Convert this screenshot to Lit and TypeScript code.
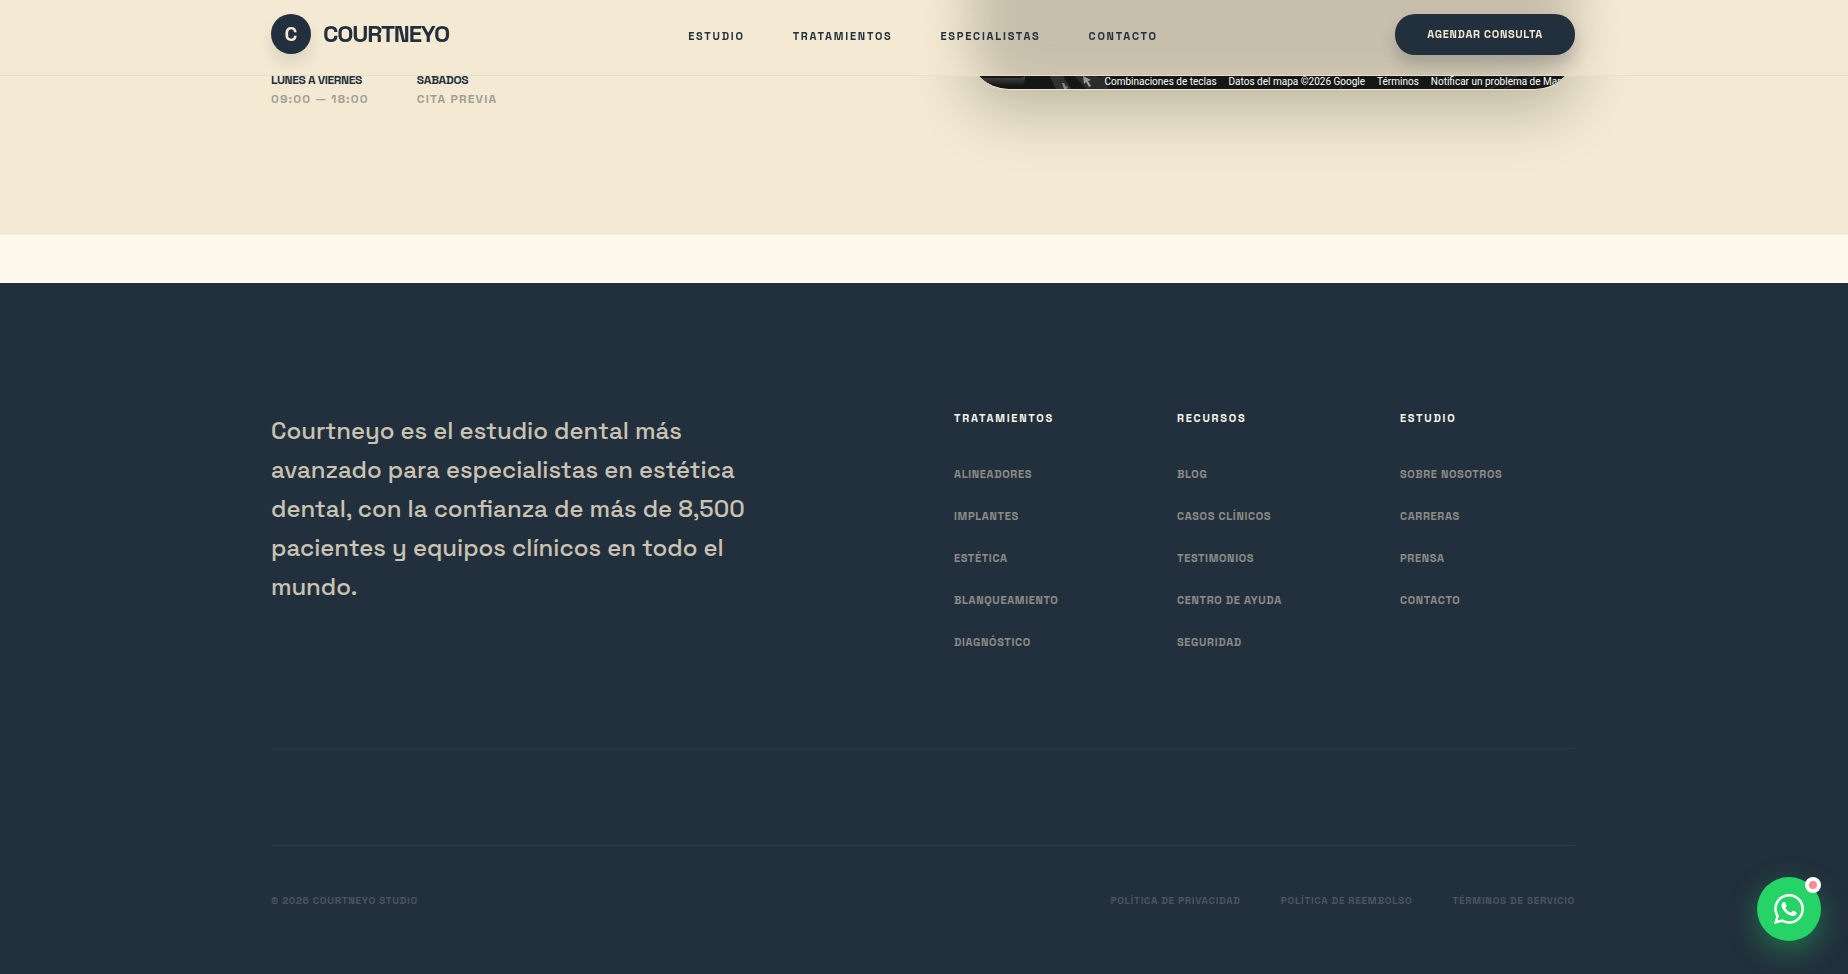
import { LitElement, html, css } from "lit";
import { customElement } from "lit/decorators.js";

const NAV = ["Estudio", "Tratamientos", "Especialistas", "Contacto"];
const COLUMNS = [
  { title: "Tratamientos", links: ["Alineadores", "Implantes", "Estética", "Blanqueamiento", "Diagnóstico"] },
  { title: "Recursos", links: ["Blog", "Casos clínicos", "Testimonios", "Centro de ayuda", "Seguridad"] },
  { title: "Estudio", links: ["Sobre nosotros", "Carreras", "Prensa", "Contacto"] },
];
const LEGAL = ["Política de privacidad", "Política de reembolso", "Términos de servicio"];
const MAP_LINKS = ["Combinaciones de teclas", "Datos del mapa ©2026 Google", "Términos", "Notificar un problema de Maps"];

@customElement("app-root")
export class AppRoot extends LitElement {
  static styles = css`
    :host {
      --navy: #222f3c;
      --cream: #f4e9d2;
      display: block;
      min-height: 100vh;
      background: var(--navy);
      color: var(--navy);
      font-family: "Space Grotesk", Inter, "Liberation Sans", sans-serif;
    }
    * { box-sizing: border-box; }
    a { color: inherit; text-decoration: none; }
    .wrap { max-width: 1400px; margin: 0 auto; padding: 0 49px 0 47px; }

    .header {
      position: fixed;
      inset: 0 0 auto 0;
      z-index: 10;
      background: var(--cream);
      border-bottom: 1px solid #e7ddc8;
    }
    /* Frosted impression of the map card sliding under the header */
    .glass { position: absolute; inset: 0; overflow: hidden; }
    .glass-row { display: flex; justify-content: flex-end; }
    .glass-map { width: 606px; height: 170px; margin-top: -70px; border-radius: 60px; background: #c7bfab; filter: blur(24px); }
    .bar {
      position: relative;
      display: grid;
      grid-template-columns: 1fr auto 1fr;
      align-items: start;
      padding-top: 14px;
      padding-bottom: 20px;
    }
    .brand { display: flex; align-items: center; gap: 12px; font-size: 24px; line-height: 40px; font-weight: 700; letter-spacing: -0.05em; }
    .mark {
      width: 40px; height: 40px; border-radius: 50%;
      background: var(--navy); color: var(--cream);
      font-size: 20px; font-weight: 700; text-align: center; letter-spacing: 0;
      box-shadow: 0 10px 15px rgba(34, 47, 60, 0.1);
    }
    .nav { display: flex; gap: 48px; padding-top: 12px; font-size: 11px; line-height: 20px; font-weight: 600; letter-spacing: 0.16em; text-transform: uppercase; }
    .cta {
      justify-self: end;
      height: 41px; padding: 0 32px 2px; border: 0; border-radius: 20px;
      background: var(--navy); color: var(--cream);
      font: inherit; font-size: 11px; font-weight: 700; letter-spacing: 0.06em; text-transform: uppercase;
      box-shadow: 0 10px 15px rgba(34, 47, 60, 0.2);
    }

    .location { background: var(--cream); }
    .location-grid {
      display: grid; grid-template-columns: 1fr 606px;
      justify-content: space-between;
      padding-bottom: 145px;
    }
    .hours { display: flex; gap: 48px; margin: 0; padding-top: 70px; height: 90px; }
    .hours dt { font-size: 12px; line-height: 20px; font-weight: 700; letter-spacing: -0.03em; text-transform: uppercase; }
    .hours dd { margin: 0; font-size: 12px; line-height: 18px; font-weight: 600; letter-spacing: 0.1em; text-transform: uppercase; opacity: 0.4; }
    .map-box { height: 90px; border-radius: 0 0 40px 40px; box-shadow: 0 20px 60px rgba(20, 30, 20, 0.26); }
    .map {
      position: relative;
      display: flex; flex-direction: column; justify-content: flex-end;
      height: 90px; overflow: hidden;
      border-radius: 0 0 40px 40px;
      border-bottom: 1px solid #f4e4d4;
      background: #151716;
    }
    .roads { position: absolute; left: 0; bottom: 0; width: 606px; height: 16px; }
    .map-links { position: relative; display: flex; justify-content: flex-end; gap: 12px; padding-right: 7px; white-space: nowrap; font: 10px/14px Roboto, sans-serif; color: #fff; }

    .strip { height: 48px; background: #fdf9ec; }

    .footer { background: var(--navy); color: var(--cream); }
    .top { display: grid; grid-template-columns: 635px 1fr; gap: 48px; padding: 128px 0 94px; border-bottom: 1px solid rgba(255, 255, 255, 0.05); }
    .pitch { margin: 0; max-width: 512px; font-size: 24px; line-height: 39px; font-weight: 500; opacity: 0.8; }
    .cols { display: grid; grid-template-columns: repeat(3, 1fr); gap: 48px; }
    .col h2 { margin: 0; font-size: 11px; line-height: 15px; font-weight: 700; letter-spacing: 0.16em; text-transform: uppercase; color: #fdf9ec; }
    .col ul { display: grid; gap: 18px; margin: 0; padding: 36px 0 0; list-style: none; }
    .col li { font-size: 11px; line-height: 24px; font-weight: 700; letter-spacing: 0.06em; text-transform: uppercase; white-space: nowrap; opacity: 0.5; }
    .spacer { height: 97px; border-bottom: 1px solid rgba(255, 255, 255, 0.05); }
    .legal { display: flex; justify-content: space-between; padding: 48px 0 66px; font-size: 10px; line-height: 14px; font-weight: 700; letter-spacing: 0.07em; text-transform: uppercase; color: #4c5661; }
    .legal nav { display: flex; gap: 40px; }

    .chat {
      position: fixed; right: 27px; bottom: 33px; z-index: 20;
      display: grid; place-items: center;
      width: 64px; height: 64px; border-radius: 50%;
      background: #25d366; color: #fff;
      box-shadow: 0 10px 30px rgba(37, 211, 102, 0.4);
    }
    .chat svg { width: 30px; height: 30px; }
    .dot { position: absolute; top: 0; right: 0; width: 16px; height: 16px; border: 4px solid #fff; border-radius: 50%; background: #ff8b8f; }
  `;

  render() {
    return html`
      <header class="header">
        <div class="glass"><div class="wrap glass-row"><div class="glass-map"></div></div></div>
        <div class="wrap bar">
          <a class="brand" href="#"><span class="mark">C</span>COURTNEYO</a>
          <nav class="nav">${NAV.map((n) => html`<a href="#">${n}</a>`)}</nav>
          <button class="cta" type="button">Agendar consulta</button>
        </div>
      </header>
      <section class="location">
        <div class="wrap location-grid">
          <dl class="hours">
            <div><dt>Lunes a viernes</dt><dd>09:00 — 18:00</dd></div>
            <div><dt>Sabados</dt><dd>Cita previa</dd></div>
          </dl>
          <div class="map-box">
            <div class="map">
              <svg class="roads" viewBox="0 0 606 16" aria-hidden="true">
                <defs>
                  <linearGradient id="panel" x1="0" y1="0" x2="0" y2="1"><stop offset="0" stop-color="#4a4d4b"/><stop offset="1" stop-color="#151716"/></linearGradient>
                </defs>
                <path d="M8 5H51Q55 5 56 2V8Q54 13 46 13H20Z" fill="url(#panel)"/>
                <path d="M79 0h13l10 16H87z" fill="#303131"/>
                <path d="M103 0h21l5 4h10v12h-22z" fill="#2b2c2c"/>
                <path d="M114 3l8 4-3 1 3 5-2 1-3-5-2 2z" fill="#9a9a9a"/>
                <path d="M93 10l2 0 2 4 2-1-1 3h-3z" fill="#8a8a8a"/>
                <path d="M125 16L136 2h20M372 0v16M520 16l30-14M535 16l34-16" stroke="#292a2a" stroke-width="2" fill="none"/>
              </svg>
              <div class="map-links">${MAP_LINKS.map((m) => html`<a href="#">${m}</a>`)}</div>
            </div>
          </div>
        </div>
      </section>
      <div class="strip"></div>
      <footer class="footer">
        <div class="wrap">
          <div class="top">
            <p class="pitch">Courtneyo es el estudio dental más avanzado para especialistas en estética dental, con la confianza de más de 8,500 pacientes y equipos clínicos en todo el mundo.</p>
            <div class="cols">${COLUMNS.map((c) => html`<div class="col"><h2>${c.title}</h2><ul>${c.links.map((l) => html`<li><a href="#">${l}</a></li>`)}</ul></div>`)}</div>
          </div>
          <div class="spacer"></div>
          <div class="legal"><span>© 2026 Courtneyo Studio</span><nav>${LEGAL.map((l) => html`<a href="#">${l}</a>`)}</nav></div>
        </div>
      </footer>
      <a class="chat" href="#" aria-label="WhatsApp">
        <svg viewBox="0 0 24 24" fill="currentColor"><path d="M17.472 14.382c-.297-.149-1.758-.867-2.03-.967-.273-.099-.471-.148-.67.15-.197.297-.767.966-.94 1.164-.173.199-.347.223-.644.075-.297-.15-1.255-.463-2.39-1.475-.883-.788-1.48-1.761-1.653-2.059-.173-.297-.018-.458.13-.606.134-.133.298-.347.446-.52.149-.174.198-.298.298-.497.099-.198.05-.371-.025-.52-.075-.149-.669-1.612-.916-2.207-.242-.579-.487-.5-.669-.51-.173-.008-.371-.01-.57-.01-.198 0-.52.074-.792.372-.272.297-1.04 1.016-1.04 2.479 0 1.462 1.065 2.875 1.213 3.074.149.198 2.096 3.2 5.077 4.487.709.306 1.262.489 1.694.625.712.227 1.36.195 1.871.118.571-.085 1.758-.719 2.006-1.413.248-.694.248-1.289.173-1.413-.074-.124-.272-.198-.57-.347m-5.421 7.403h-.004a9.87 9.87 0 01-5.031-1.378l-.361-.214-3.741.982.998-3.648-.235-.374a9.86 9.86 0 01-1.51-5.26c.001-5.45 4.436-9.884 9.888-9.884 2.64 0 5.122 1.03 6.988 2.898a9.825 9.825 0 012.893 6.994c-.003 5.45-4.437 9.884-9.885 9.884m8.413-18.297A11.815 11.815 0 0012.05 0C5.495 0 .16 5.335.157 11.892c0 2.096.547 4.142 1.588 5.945L.057 24l6.305-1.654a11.882 11.882 0 005.683 1.448h.005c6.554 0 11.89-5.335 11.893-11.893a11.821 11.821 0 00-3.48-8.413z"/></svg>
        <span class="dot"></span>
      </a>
    `;
  }
}
